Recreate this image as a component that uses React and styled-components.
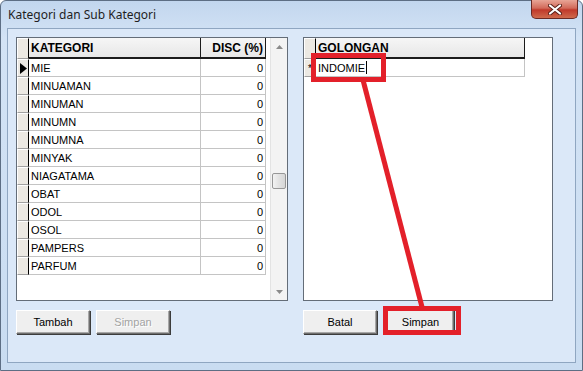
import React from 'react';
import styled, { createGlobalStyle } from 'styled-components';

const GlobalStyle = createGlobalStyle`
    html, body {
        margin: 0;
        padding: 0;
        background: #ffffff;
    }
`;

const kategori = [
    'MIE', 'MINUAMAN', 'MINUMAN', 'MINUMN', 'MINUMNA', 'MINYAK',
    'NIAGATAMA', 'OBAT', 'ODOL', 'OSOL', 'PAMPERS', 'PARFUM'
];

const Window = styled('div')`
    position: relative;
    width: 583px;
    height: 371px;
    box-sizing: border-box;
    border: 1px solid #5d6e84;
    border-radius: 6px 6px 0 0;
    background: linear-gradient(180deg, #c2d6ee 0%, #d3e3f5 10%, #c9dcf1 100%);
    display: flex;
    flex-direction: column;
    font-family: "Liberation Sans", Arial, sans-serif;
`;

const TitleBar = styled('div')`
    height: 27px;
    display: flex;
    align-items: center;
    justify-content: space-between;
    padding-left: 7px;
    font-family: "Noto Sans", "Open Sans", sans-serif;
    font-size: 12px;
    color: #1e1e1e;
`;

const CloseButton = styled('div')`
    align-self: flex-start;
    width: 47px;
    height: 19px;
    margin-right: 4px;
    margin-top: -1px;
    box-sizing: border-box;
    border: 1px solid #6b2a24;
    border-top: none;
    border-radius: 0 0 5px 5px;
    background: linear-gradient(180deg, #e8a596 0%, #d26a5a 45%, #c0392a 55%, #cf6a4c 100%);
    display: flex;
    align-items: center;
    justify-content: center;
`;

const Client = styled('div')`
    flex: 1;
    margin: 0 6px 7px 6px;
    box-sizing: border-box;
    border: 1px solid #8fa6c1;
    background: #dbe8f8;
    padding: 8px 8px 0 8px;
    display: flex;
    gap: 15px;
`;

const Panel = styled('div')`
    display: flex;
    flex-direction: column;
    gap: 9px;
`;

const GridBox = styled('div')`
    width: ${p => p.$width}px;
    height: 264px;
    box-sizing: border-box;
    border: 1px solid #646d78;
    background: #ffffff;
    display: flex;
`;

const Table = styled('div')`
    display: flex;
    flex-direction: column;
    align-items: flex-start;
`;

const Row = styled('div')`
    display: flex;
    height: ${p => (p.$header ? 21 : 18)}px;
`;

const Indicator = styled('div')`
    width: 12px;
    box-sizing: border-box;
    background: #ece9e3;
    border-top: 1px solid #ffffff;
    border-left: 1px solid #ffffff;
    border-bottom: 1px solid #a0a0a0;
    border-right: 1px solid #000000;
    display: flex;
    align-items: center;
    justify-content: center;
    font-size: 10px;
    color: #000;
`;

const HeaderCell = styled('div')`
    width: ${p => p.$w}px;
    box-sizing: border-box;
    background: linear-gradient(180deg, #f6f6f6 0%, #e7e7e7 100%);
    border-bottom: 2px solid #1b1b1b;
    border-right: 1px solid #1b1b1b;
    padding: 0 2px;
    display: flex;
    align-items: center;
    justify-content: ${p => (p.$right ? 'flex-end' : 'flex-start')};
    font-size: 12px;
    font-weight: bold;
    color: #000;
`;

const Cell = styled('div')`
    width: ${p => p.$w}px;
    box-sizing: border-box;
    border-bottom: 1px solid #c4c4c4;
    border-right: 1px solid #c4c4c4;
    padding: 0 2px;
    display: flex;
    align-items: center;
    justify-content: ${p => (p.$right ? 'flex-end' : 'flex-start')};
    font-size: 11px;
    color: #000;
    white-space: nowrap;
`;

const Caret = styled('span')`
    display: inline-block;
    width: 1px;
    height: 13px;
    background: #000;
    margin-left: 1px;
`;

const Filler = styled('div')`
    flex: 1;
`;

const ScrollBar = styled('div')`
    width: 17px;
    box-sizing: border-box;
    border-left: 1px solid #e3e3e3;
    background: #f3f3f3;
    display: flex;
    flex-direction: column;
    align-items: center;
`;

const ArrowBtn = styled('div')`
    width: 16px;
    height: 17px;
    display: flex;
    align-items: center;
    justify-content: center;
`;

const Track = styled('div')`
    flex: 1;
    width: 100%;
    display: flex;
    flex-direction: column;
    align-items: center;
    padding-top: 118px;
    box-sizing: border-box;
`;

const Thumb = styled('div')`
    width: 14px;
    height: 16px;
    box-sizing: border-box;
    border: 1px solid #979797;
    border-radius: 2px;
    background: linear-gradient(90deg, #f2f2f2 0%, #e2e2e2 50%, #d6d6d6 100%);
`;

const ButtonRow = styled('div')`
    display: flex;
    gap: ${p => p.$gap || 6}px;
`;

const Button = styled('div')`
    width: ${p => p.$w || 74}px;
    height: 24px;
    box-sizing: border-box;
    background: #efefef;
    border-top: 1px solid #ffffff;
    border-left: 1px solid #ffffff;
    border-right: 1px solid #6e6e6e;
    border-bottom: 1px solid #6e6e6e;
    box-shadow: inset -1px -1px 0 #a8a8a8, 1px 1px 0 #3c3c3c;
    display: flex;
    align-items: center;
    justify-content: center;
    font-size: 11px;
    color: ${p => (p.$disabled ? '#a3a3a3' : '#000')};
    text-shadow: ${p => (p.$disabled ? '1px 1px 0 #ffffff' : 'none')};
`;

const Overlay = styled('svg')`
    position: absolute;
    top: -1px;
    left: -1px;
    pointer-events: none;
`;

const Arrow = ({ down }) => (
    <svg width="7" height="4" viewBox="0 0 7 4">
        <path d={down ? 'M0 0 L7 0 L3.5 4 Z' : 'M0 4 L7 4 L3.5 0 Z'} fill="#8a8a8a" />
    </svg>
);

const App = () => (
    <>
        <GlobalStyle />
        <Window>
            <TitleBar>
                <span>Kategori dan Sub Kategori</span>
                <CloseButton>
                    <svg width="14" height="11" viewBox="0 0 14 11">
                        <path d="M2 1.5 L12 9.5 M12 1.5 L2 9.5" stroke="#5a2018" strokeWidth="4" strokeLinecap="round" />
                        <path d="M2 1.5 L12 9.5 M12 1.5 L2 9.5" stroke="#ffffff" strokeWidth="2.2" strokeLinecap="round" />
                    </svg>
                </CloseButton>
            </TitleBar>
            <Client>
                <Panel>
                    <GridBox $width={272}>
                        <Table>
                            <Row $header>
                                <Indicator />
                                <HeaderCell $w={172}>KATEGORI</HeaderCell>
                                <HeaderCell $w={65} $right>DISC (%)</HeaderCell>
                            </Row>
                            {kategori.map((k, i) => (
                                <Row key={k}>
                                    <Indicator>
                                        {i === 0 && (
                                            <svg width="7" height="11" viewBox="0 0 7 11">
                                                <path d="M0 0 L7 5.5 L0 11 Z" fill="#000" />
                                            </svg>
                                        )}
                                    </Indicator>
                                    <Cell $w={172}>{k}</Cell>
                                    <Cell $w={65} $right>0</Cell>
                                </Row>
                            ))}
                        </Table>
                        <Filler />
                        <ScrollBar>
                            <ArrowBtn><Arrow /></ArrowBtn>
                            <Track><Thumb /></Track>
                            <ArrowBtn><Arrow down /></ArrowBtn>
                        </ScrollBar>
                    </GridBox>
                    <ButtonRow>
                        <Button>Tambah</Button>
                        <Button $disabled>Simpan</Button>
                    </ButtonRow>
                </Panel>
                <Panel>
                    <GridBox $width={250}>
                        <Table>
                            <Row $header>
                                <Indicator />
                                <HeaderCell $w={209}>GOLONGAN</HeaderCell>
                            </Row>
                            <Row>
                                <Indicator>*</Indicator>
                                <Cell $w={209}>INDOMIE<Caret /></Cell>
                            </Row>
                        </Table>
                    </GridBox>
                    <ButtonRow $gap={10}>
                        <Button>Batal</Button>
                        <Button $w={67}>Simpan</Button>
                    </ButtonRow>
                </Panel>
            </Client>
            <Overlay width="583" height="371" viewBox="0 0 583 371">
                <rect x="313.5" y="55.5" width="70" height="24" fill="none" stroke="#e3202a" strokeWidth="5" />
                <line x1="363" y1="80" x2="422" y2="307" stroke="#e3202a" strokeWidth="5" />
                <rect x="385.5" y="308.5" width="73" height="24" fill="none" stroke="#e3202a" strokeWidth="5" />
            </Overlay>
        </Window>
    </>
);

export default App;
